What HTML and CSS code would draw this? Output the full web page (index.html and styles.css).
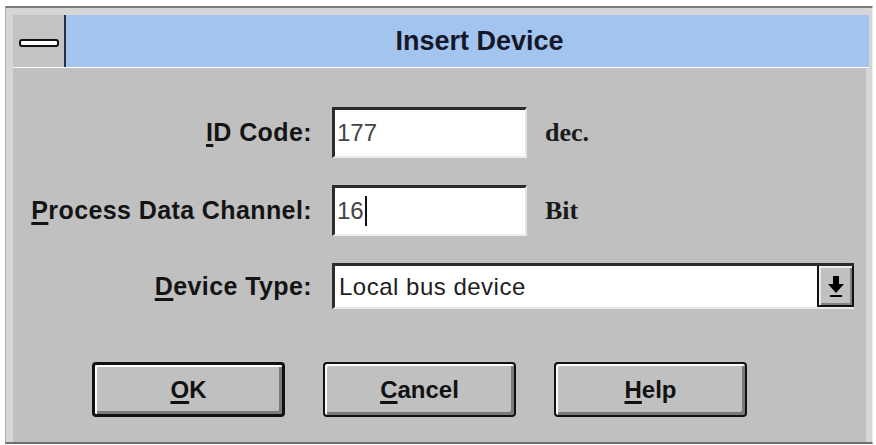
FILE: index.html
```html
<!DOCTYPE html>
<html>
<head>
<meta charset="utf-8">
<link rel="stylesheet" href="styles.css">
</head>
<body>
<div class="screen">
  <div class="window">
    <div class="titlebar">
      <div class="sysmenu"><span class="dash"></span></div>
      <div class="caption">Insert Device</div>
    </div>
    <div class="body">
      <div class="form">
        <label class="lbl"><u>I</u>D Code:</label>
        <div class="edit">177</div>
        <span class="unit">dec.</span>

        <label class="lbl"><u>P</u>rocess Data Channel:</label>
        <div class="edit">16<span class="caret"></span></div>
        <span class="unit">Bit</span>

        <label class="lbl"><u>D</u>evice Type:</label>
        <div class="combo">
          <span class="combo-text">Local bus device</span>
          <span class="drop">
            <svg width="18" height="22" viewBox="0 0 18 22">
              <path d="M6 1h6v8h5l-8 9-8-9h5z" fill="#000"/>
              <rect x="3" y="20" width="12" height="2" fill="#000"/>
            </svg>
          </span>
        </div>
      </div>
      <div class="buttons">
        <button class="btn btn-default"><u>O</u>K</button>
        <button class="btn"><u>C</u>ancel</button>
        <button class="btn"><u>H</u>elp</button>
      </div>
    </div>
  </div>
</div>
</body>
</html>
```
FILE: styles.css
```css
html, body {
  margin: 0;
  padding: 0;
  background: #ffffff;
}
body {
  width: 876px;
  height: 445px;
  overflow: hidden;
  font-family: "Liberation Sans", Arial, sans-serif;
}
.screen {
  padding: 6px 0 0 5px;
}
.window {
  border-top: 2px solid #7c7c7c;
  border-left: 1px solid #a8a8a8;
  border-right: 1px solid #ececec;
  border-bottom: 2px solid #6e6e6e;
  background: #d6d6d6;
  padding: 7px 3px 0 7px;
  box-sizing: border-box;
  width: 868px;
  height: 438px;
  display: flex;
  flex-direction: column;
}
.titlebar {
  display: flex;
  height: 52px;
  border-bottom: 1px solid #ffffff;
  flex: none;
}
.sysmenu {
  width: 51px;
  background: #c4c4c4;
  border-right: 2px solid #2c2f40;
  display: flex;
  align-items: center;
  justify-content: center;
}
.dash {
  display: block;
  width: 36px;
  height: 4px;
  background: #ffffff;
  border: 2px solid #111;
  border-radius: 3px;
  margin-top: 3px;
}
.caption {
  flex: 1;
  background: #a2c4ee;
  display: flex;
  align-items: center;
  justify-content: center;
  padding-left: 24px;
  font-weight: bold;
  font-size: 27px;
  color: #16182a;
}
.body {
  flex: 1;
  background: #c0c0c0;
  padding-top: 39px;
  margin-right: 3px;
}
.form {
  display: grid;
  grid-template-columns: 319px 213px 1fr;
  grid-template-rows: 51px 51px 46px;
  row-gap: 27px;
  align-items: center;
}
.lbl {
  text-align: right;
  padding-right: 20px;
  font-weight: bold;
  font-size: 25px;
  color: #141414;
  letter-spacing: 0.4px;
}
u {
  text-decoration-thickness: 3px;
  text-underline-offset: 3px;
}
.edit {
  width: 195px;
  height: 51px;
  box-sizing: border-box;
  background: #ffffff;
  border-top: 3px solid #2c2c2c;
  border-left: 3px solid #2c2c2c;
  border-right: 2px solid #e4e4e4;
  border-bottom: 2px solid #ececec;
  display: flex;
  align-items: center;
  padding-left: 2px;
  font-size: 24px;
  color: #444444;
}
.caret {
  display: inline-block;
  width: 2px;
  height: 30px;
  background: #111;
  margin-left: 1px;
}
.unit {
  font-family: "Liberation Serif", "Times New Roman", serif;
  font-weight: bold;
  font-size: 26px;
  color: #1a1a1a;
}
.combo {
  grid-column: 2 / span 2;
  width: 522px;
  height: 46px;
  box-sizing: border-box;
  background: #ffffff;
  border-top: 3px solid #2c2c2c;
  border-left: 3px solid #2c2c2c;
  border-bottom: 2px solid #e8e8e8;
  display: flex;
  align-items: stretch;
}
.combo-text {
  flex: 1;
  display: flex;
  align-items: center;
  padding-left: 4px;
  font-size: 24px;
  color: #1e1e1e;
  letter-spacing: 0.5px;
}
.drop {
  width: 37px;
  box-sizing: border-box;
  background: #c0c0c0;
  border: 2px solid #111;
  border-top: none;
  box-shadow: inset 2px 2px 0 #ececec, inset -2px -2px 0 #808080;
  display: flex;
  align-items: center;
  justify-content: center;
}
.buttons {
  display: flex;
  gap: 38px;
  padding-left: 79px;
  margin-top: 53px;
}
.btn {
  width: 193px;
  height: 55px;
  box-sizing: border-box;
  background: #c0c0c0;
  border: 2px solid #111;
  border-radius: 4px;
  box-shadow: inset 2px 2px 0 #ffffff, inset -3px -3px 0 #7a7a7a;
  font-family: "Liberation Sans", Arial, sans-serif;
  font-weight: bold;
  font-size: 24px;
  color: #111;
  padding: 0;
}
.btn-default {
  border-width: 3px;
}
```
